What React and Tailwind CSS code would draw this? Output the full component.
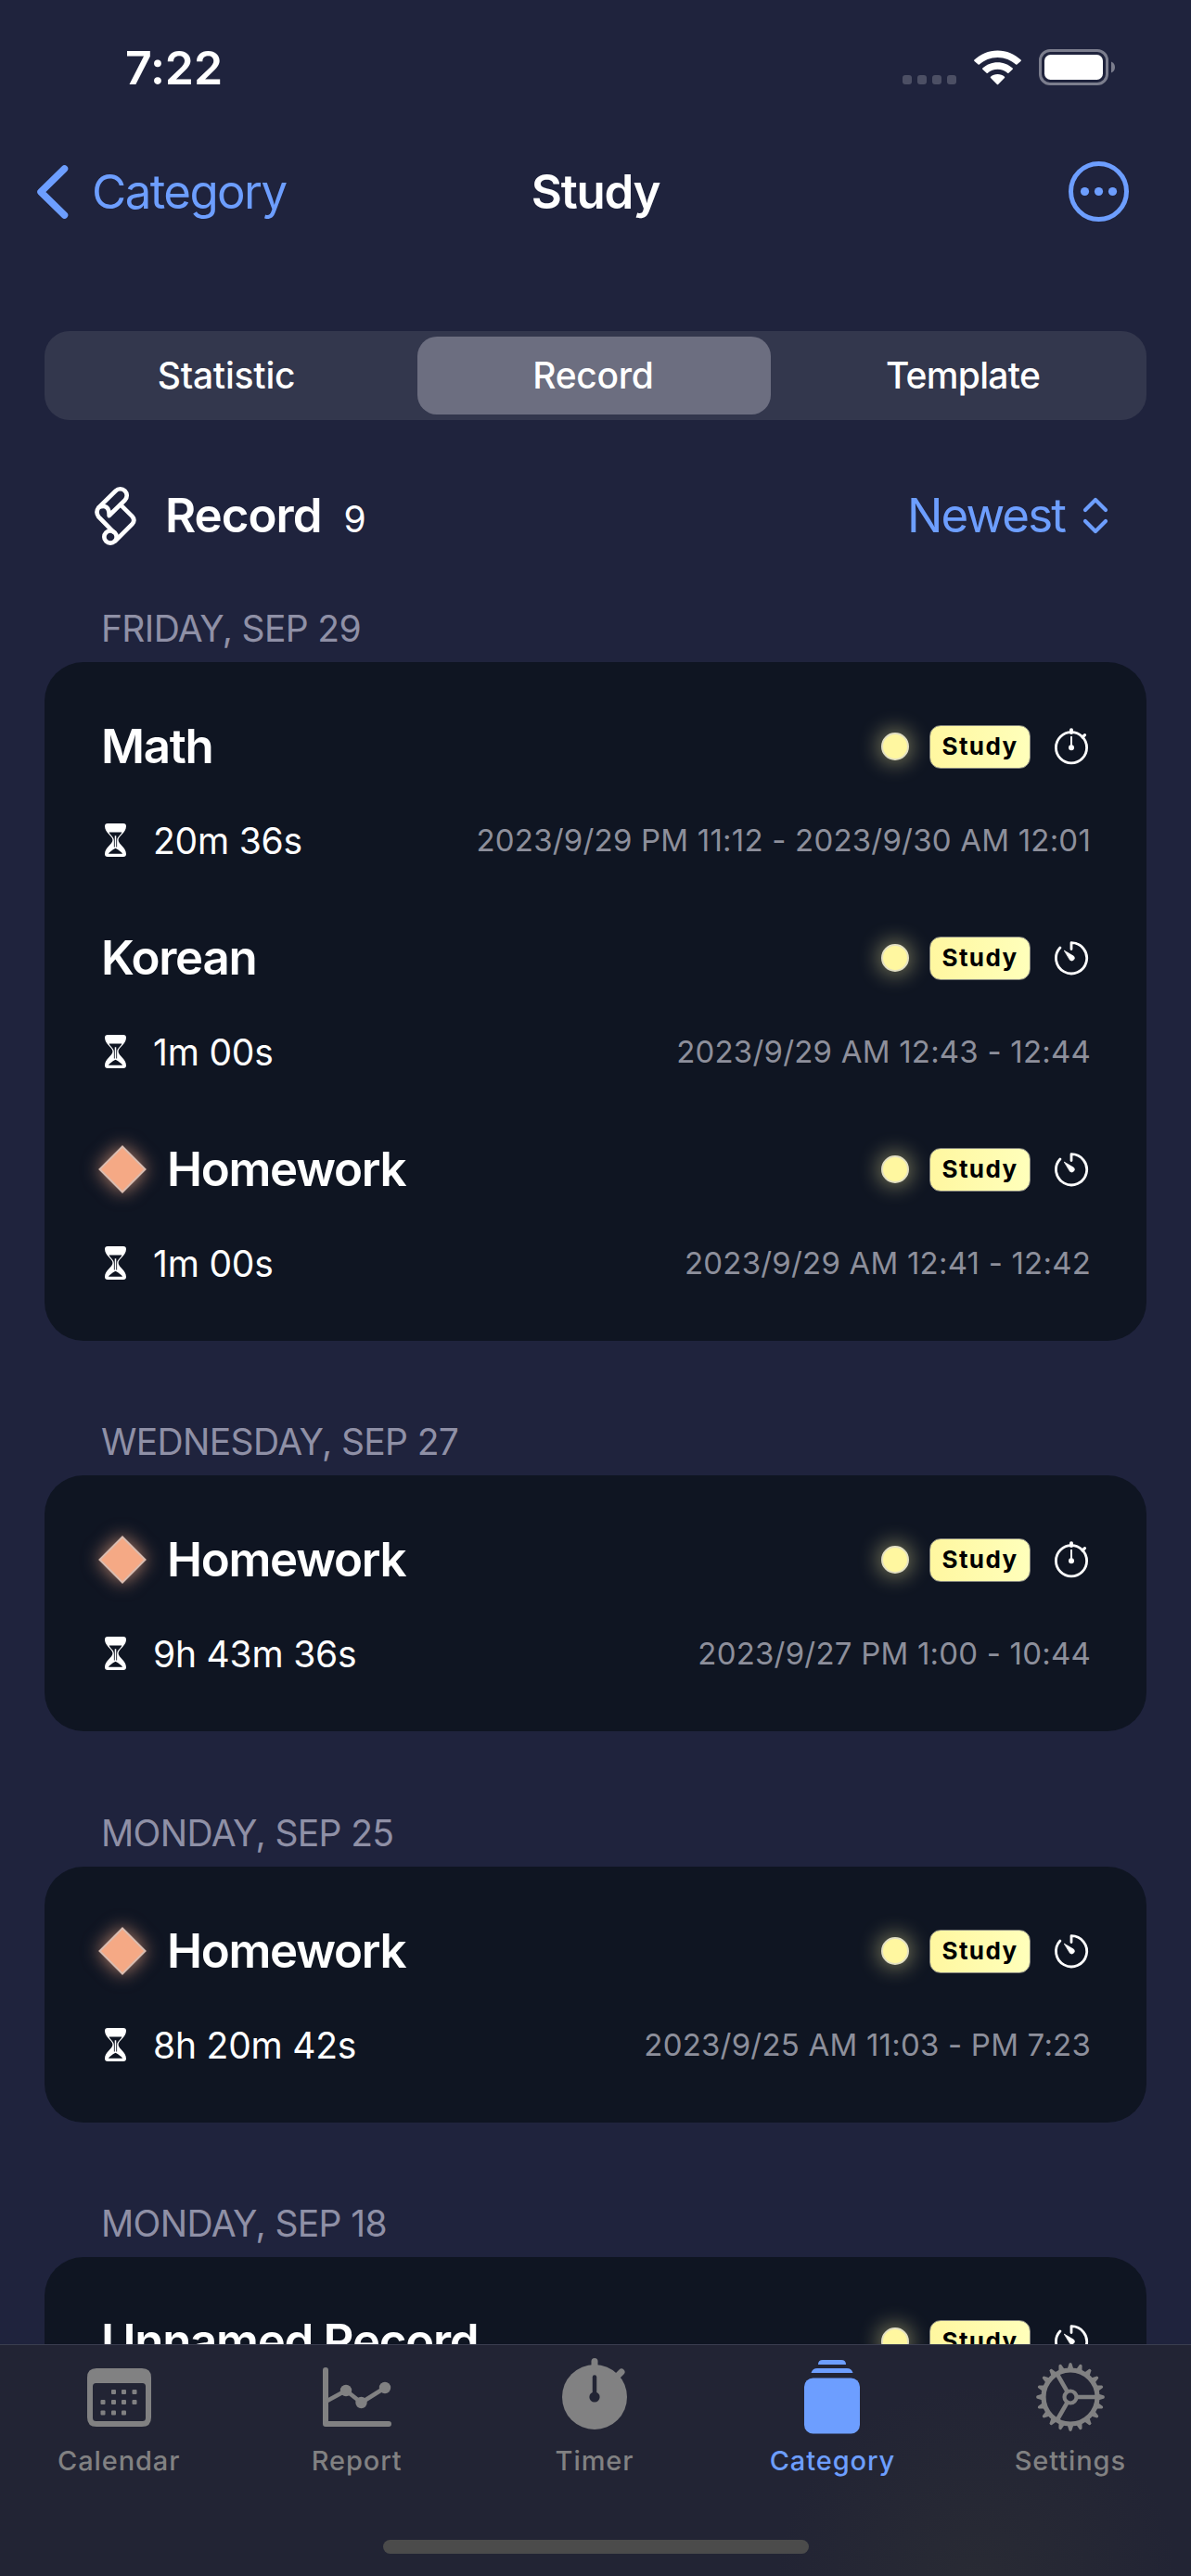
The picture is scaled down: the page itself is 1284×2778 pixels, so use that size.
import React from "react";

const groups = [
  {
    day: "FRIDAY, SEP 29",
    head: "h-[108px]",
    rows: [
      { title: "Math", time: "20m 36s", range: "2023/9/29 PM 11:12 - 2023/9/30 AM 12:01", kind: "stopwatch" },
      { title: "Korean", time: "1m 00s", range: "2023/9/29 AM 12:43 - 12:44", kind: "timer" },
      { title: "Homework", gem: true, time: "1m 00s", range: "2023/9/29 AM 12:41 - 12:42", kind: "timer" },
    ],
  },
  {
    day: "WEDNESDAY, SEP 27",
    head: "h-[145px]",
    rows: [{ title: "Homework", gem: true, time: "9h 43m 36s", range: "2023/9/27 PM 1:00 - 10:44", kind: "stopwatch" }],
  },
  {
    day: "MONDAY, SEP 25",
    head: "h-[146px]",
    rows: [{ title: "Homework", gem: true, time: "8h 20m 42s", range: "2023/9/25 AM 11:03 - PM 7:23", kind: "timer" }],
  },
  {
    day: "MONDAY, SEP 18",
    head: "h-[145px]",
    rows: [{ title: "Unnamed Record", kind: "timer" }],
  },
];

function StatusBar() {
  return (
    <div className="flex h-[146px] shrink-0 items-center justify-between pl-[135px] pr-[81px]">
      <span className="text-[50px] font-semibold leading-none tracking-[-0.1px]">7:22</span>
      <div className="flex items-center">
        <div className="mr-[19px] flex gap-[6px] pt-[26px]">
          {[0, 1, 2, 3].map((i) => (
            <span key={i} className="h-[10px] w-[10px] rounded-[3px] bg-[#4c4f64]" />
          ))}
        </div>
        <svg className="mr-[19px]" width="51" height="38" viewBox="0 0 51 38" fill="#fff">
          <path d="M25.5 0.5C35.300 0.500 44.200 4.400 50.600 10.600Q51.200 11.300 50.500 12L46.400 15.600Q45.800 16.100 45.200 15.600C40.100 10.900 33.200 8 25.500 8S10.900 10.900 5.800 15.600Q5.200 16.100 4.600 15.600L0.500 12Q-0.200 11.300 0.400 10.600C6.800 4.400 15.700 0.500 25.500 0.500Z" />
          <path d="M25.500 13.300C31.700 13.300 37.400 15.700 41.700 19.600Q42.300 20.200 41.700 20.800L37.400 24.700Q36.800 25.200 36.200 24.700C33.300 22.200 29.600 20.700 25.500 20.700S17.700 22.200 14.800 24.700Q14.200 25.200 13.600 24.700L9.300 20.800Q8.700 20.200 9.300 19.600C13.600 15.700 19.300 13.300 25.500 13.300Z" />
          <path d="M25.500 26C28.400 26 31 27 33 28.700Q33.600 29.300 33 29.900L26.100 36.900Q25.500 37.500 24.900 36.900L18 29.900Q17.400 29.300 18 28.700C20 27 22.600 26 25.500 26Z" />
        </svg>
        <svg className="mb-px" width="83" height="39" viewBox="0 0 83 39">
          <rect x="1.500" y="1.500" width="72" height="36" rx="10.500" fill="none" stroke="#7b7d8d" strokeWidth="3" />
          <rect x="6" y="6" width="63" height="27" rx="6.500" fill="#fff" />
          <path d="M78 13.500C80.500 14.500 82 16.800 82 19.500S80.500 24.500 78 25.500Z" fill="#7b7d8d" />
        </svg>
      </div>
    </div>
  );
}

function NavBar() {
  return (
    <div className="grid h-[121px] shrink-0 grid-cols-3 items-center pl-[38px] pr-[67px]">
      <div className="flex items-center gap-[24px] text-[#6d9eff]">
        <svg width="37" height="60" viewBox="0 0 37 60" fill="none" stroke="currentColor" strokeWidth="7.500" strokeLinecap="round" strokeLinejoin="round">
          <path d="M31.500 5L6 30L31.500 55" />
        </svg>
        <span className="text-[51px] leading-none tracking-[-1.6px]">Category</span>
      </div>
      <span className="justify-self-center pl-[29px] text-[51px] font-semibold leading-none tracking-[-1.2px]">Study</span>
      <svg className="justify-self-end" width="65" height="65" viewBox="0 0 65 65" fill="#6d9eff">
        <circle cx="32.500" cy="32.500" r="30" fill="none" stroke="#6d9eff" strokeWidth="5" />
        <circle cx="17.500" cy="32.500" r="4.600" />
        <circle cx="32.500" cy="32.500" r="4.600" />
        <circle cx="47.500" cy="32.500" r="4.600" />
      </svg>
    </div>
  );
}

function Segments() {
  return (
    <div className="mx-[48px] mt-[90px] grid h-[96px] shrink-0 grid-cols-3 items-center rounded-[27px] bg-[#33374d] text-center text-[39px] font-medium leading-[84px] tracking-[-0.5px]">
      <span className="pr-[4px] tracking-[-0.2px]">Statistic</span>
      <span className="ml-[6px] mr-[9px] rounded-[21px] bg-[#6c6e80] pr-[2px] tracking-[-0.3px]">Record</span>
      <span className="tracking-[-0.7px]">Template</span>
    </div>
  );
}

function ScrollIcon() {
  return (
    <svg width="49" height="67" viewBox="60 66 147 201" fill="none" stroke="#fff" strokeWidth="14" strokeLinejoin="round" strokeLinecap="round">
      <path d="M79 139L134 85A21 21 0 0 1 164 115L113 165C114 148 108 135 95 135Q86 135 79 139Q68 153 79 169L126 217" />
      <path d="M150 130L187 167Q199 180 187 193L133 247" />
      <circle cx="117" cy="234" r="20" />
    </svg>
  );
}

function ListHeader() {
  return (
    <div className="mt-[53px] flex h-[100px] shrink-0 items-center justify-between pl-[100px] pr-[88px]">
      <div className="flex items-center">
        <ScrollIcon />
        <div className="ml-[29px] flex items-baseline pb-[2px] leading-none">
          <span className="text-[51px] font-semibold tracking-[-1px]">Record</span>
          <span className="ml-[24px] text-[39px]">9</span>
        </div>
      </div>
      <div className="flex items-center gap-[18px] text-[#6d9eff]">
        <span className="pb-[2px] text-[51px] leading-none tracking-[-1.9px]">Newest</span>
        <svg width="30" height="42" viewBox="0 0 30 42" fill="none" stroke="currentColor" strokeWidth="4.200" strokeLinecap="round" strokeLinejoin="round">
          <path d="M4 15L15 4L26 15M4 27L15 38L26 27" />
        </svg>
      </div>
    </div>
  );
}

function Gem() {
  return (
    <svg className="-ml-[3px] mr-[22px] overflow-visible drop-shadow-[0_0_10px_rgba(246,170,132,0.75)]" width="52" height="52" viewBox="0 0 52 52">
      <path d="M26 1.500L50.500 26L26 50.500L1.500 26Z" fill="#f5a985" stroke="#d9bcb0" strokeWidth="2" />
    </svg>
  );
}

function Hourglass() {
  return (
    <svg className="ml-[4px] mr-[29px]" width="23" height="36" viewBox="0 0 22.6 35.300">
      <path
        fill="#fff"
        fillRule="evenodd"
        d="M3 0H19.600Q22.600 0 22.600 3C22.600 10 14.300 13.500 14.300 17.600C14.300 21.700 22.600 25.500 22.600 32.300Q22.600 35.300 19.600 35.300H3Q0 35.300 0 32.300C0 25.500 8.300 21.700 8.300 17.600C8.300 13.500 0 10 0 3Q0 0 3 0ZM4.500 9.400H18.100C16.800 13 12.900 14 12.900 18V25H9.700V18C9.700 14 5.800 13 4.500 9.400ZM3.800 32.200Q5.500 29.500 11.300 26.300Q17.100 29.500 18.800 32.200Z"
      />
      <path d="M11.300 13V26" stroke="#fff" strokeWidth="1.500" />
    </svg>
  );
}

function KindIcon({ kind }) {
  if (kind === "stopwatch") {
    return (
      <svg width="42" height="48" viewBox="0 0 42 48" fill="none" stroke="#fff" strokeLinecap="round">
        <circle cx="21" cy="25.300" r="16.600" strokeWidth="2.800" />
        <path d="M21 6.300V9" strokeWidth="4" />
        <path d="M33 14L35.500 11.600" strokeWidth="3.200" />
        <path d="M21 13.800V25" strokeWidth="2" />
        <circle cx="21" cy="25.300" r="3" fill="#fff" stroke="none" />
      </svg>
    );
  }
  return (
    <svg width="42" height="48" viewBox="0 0 42 48" fill="none" stroke="#fff" strokeLinecap="round" strokeLinejoin="round">
      <path d="M21 14.500V7.700A16.600 16.600 0 1 1 8.900 13" strokeWidth="2.800" />
      <path d="M13.600 16.300L23.700 22.300A2.900 2.900 0 0 1 19.800 26.500Z" fill="#fff" strokeWidth="0.800" />
    </svg>
  );
}

function Row({ row }) {
  return (
    <div className="flex h-[228px] flex-col pl-[61px] pr-[60px] pt-[33px]">
      <div className="flex h-[68px] items-center justify-between">
        <div className="flex items-center">
          {row.gem && <Gem />}
          <span className="pb-[2px] text-[51px] font-semibold leading-none tracking-[-1.3px]">{row.title}</span>
        </div>
        <div className="flex items-center">
          <span className="mr-[22px] h-[30px] w-[30px] rounded-full border-2 border-[#e3e0c3] bg-[#fff7a0] shadow-[0_0_22px_3px_rgba(255,247,160,0.45)]" />
          <span className="mr-[23px] flex h-[47px] w-[109px] items-center justify-center rounded-[12px] border border-[#85857e] bg-linear-to-r from-[#fff7a0] to-[#ffffbb] pb-px text-[26px] font-bold leading-none tracking-[1.4px] text-black">
            Study
          </span>
          <KindIcon kind={row.kind} />
        </div>
      </div>
      {row.time && (
        <div className="mt-[33px] flex h-[68px] items-center justify-between">
          <div className="flex items-center">
            <Hourglass />
            <span className="text-[39px] leading-none tracking-[-0.2px]">{row.time}</span>
          </div>
          <span className="text-[33px] leading-none tracking-[0.2px] text-[#8d8f9b]">{row.range}</span>
        </div>
      )}
    </div>
  );
}

function Group({ group }) {
  return (
    <section className="shrink-0">
      <h2 className={`flex items-end pb-[12px] pl-[109px] text-[39px] leading-[48px] tracking-[-0.65px] text-[#8f90a6] ${group.head}`}>
        {group.day}
      </h2>
      <div className="mx-[48px] rounded-[42px] bg-[#0f1522] py-[24px]">
        {group.rows.map((row, i) => (
          <Row key={i} row={row} />
        ))}
      </div>
    </section>
  );
}

function CalendarIcon() {
  const dots = [
    [28.500, 31], [39.500, 31], [51, 31],
    [17, 42], [28.500, 42], [39.500, 42], [51, 42],
    [17, 53.500], [28.500, 53.500], [39.500, 53.500],
  ];
  return (
    <svg width="69" height="84" viewBox="0 -5.500 69 84" fill="currentColor">
      <path fillRule="evenodd" d="M10 5.500H59Q69 5.500 69 15.500V58.500Q69 68.500 59 68.500H10Q0 68.500 0 58.500V15.500Q0 5.500 10 5.500ZM9.500 21.500Q6 21.500 6 25V59Q6 62.500 9.500 62.500H59.500Q63 62.500 63 59V25Q63 21.500 59.500 21.500Z" />
      {dots.map(([x, y], i) => (
        <rect key={i} x={x - 2.500} y={y - 2.500} width="5" height="5" rx="1" />
      ))}
    </svg>
  );
}

function ReportIcon() {
  return (
    <svg width="74" height="84" viewBox="0 0 74 84" fill="none" stroke="currentColor" strokeLinecap="round" strokeLinejoin="round">
      <path d="M3 13V71H71" strokeWidth="6" />
      <path d="M3 47L25 35L41.500 48L67 32" strokeWidth="4.500" />
      <g fill="currentColor" stroke="none">
        <circle cx="25" cy="35" r="6.200" />
        <circle cx="41.500" cy="48" r="6.200" />
        <circle cx="67" cy="32" r="6.200" />
      </g>
    </svg>
  );
}

function TimerIcon() {
  return (
    <svg width="76" height="84" viewBox="0 0 76 84" stroke="currentColor" fill="currentColor" strokeLinecap="round">
      <circle cx="38" cy="42" r="35" stroke="none" />
      <path d="M38 3.500V12" strokeWidth="7" />
      <path d="M62 20L67 15" strokeWidth="7" />
      <path d="M38 20.500V40" stroke="#222434" strokeWidth="4.500" />
      <circle cx="38" cy="42" r="5.600" fill="#222434" stroke="none" />
    </svg>
  );
}

function CategoryIcon() {
  return (
    <svg width="60" height="84" viewBox="0 0 60 84" fill="currentColor">
      <path d="M15 7Q15 2 20 2H40Q45 2 45 7Z" />
      <path d="M7.500 16Q9 11 14 11H46Q51 11 52.500 16Z" />
      <rect x="0" y="21.500" width="60" height="60" rx="9.500" />
    </svg>
  );
}

function SettingsIcon() {
  return (
    <svg width="76" height="84" viewBox="-38 -42 76 84" fill="none" stroke="currentColor" strokeLinecap="round">
      <circle r="29" strokeWidth="5.200" />
      <circle r="6.500" strokeWidth="4.200" />
      {[0, 120, 240].map((a) => (
        <path key={a} d="M8 0H28" strokeWidth="4.600" transform={`rotate(${a})`} />
      ))}
      {Array.from({ length: 20 }, (_, i) => (
        <path key={i} d="M30 -3.400L36.300 -1.400Q37.600 0 36.300 1.400L30 3.400Z" fill="currentColor" stroke="none" transform={`rotate(${i * 18})`} />
      ))}
    </svg>
  );
}

const tabs = [
  { label: "Calendar", Icon: CalendarIcon },
  { label: "Report", Icon: ReportIcon },
  { label: "Timer", Icon: TimerIcon },
  { label: "Category", Icon: CategoryIcon, active: true },
  { label: "Settings", Icon: SettingsIcon },
];

function TabBar() {
  return (
    <nav className="h-[250px] shrink-0 border-t border-[#3b3e50] bg-[#222434] bg-[radial-gradient(circle_at_82%_105%,#292b34_0%,#222434_20%)]">
      <div className="mr-[2px] grid grid-cols-5 pt-[14px]">
        {tabs.map(({ label, Icon, active }) => (
          <div key={label} className={`flex flex-col items-center ${active ? "text-[#6d9eff]" : "text-[#818182]"}`}>
            <Icon />
            <span className="mt-[9px] text-[29px] font-medium leading-[36px] tracking-[0.9px]">{label}</span>
          </div>
        ))}
      </div>
      <div className="mx-auto mt-[67px] h-[15px] w-[459px] rounded-full bg-[#4b4b4b]" />
    </nav>
  );
}

export default function App() {
  return (
    <div className="flex h-[2778px] w-[1284px] flex-col overflow-hidden bg-[#1f233d] font-['Inter','Liberation_Sans',sans-serif] text-white">
      <div className="flex min-h-0 flex-1 flex-col overflow-hidden">
        <StatusBar />
        <NavBar />
        <Segments />
        <ListHeader />
        {groups.map((group) => (
          <Group key={group.day} group={group} />
        ))}
      </div>
      <TabBar />
    </div>
  );
}
